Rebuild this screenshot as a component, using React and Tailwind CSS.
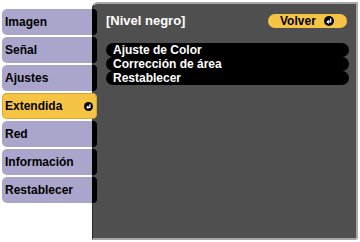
import React from 'react'

const TABS = ['Imagen', 'Señal', 'Ajustes', 'Extendida', 'Red', 'Información', 'Restablecer']
const SELECTED = 'Extendida'

const ITEMS = ['Ajuste de Color', 'Corrección de área', 'Restablecer']

function EnterIcon({ size = 10 }) {
  return (
    <svg width={size} height={size} viewBox="0 0 10 10">
      <circle cx="5" cy="5" r="5" fill="#000" />
      <path d="M6.6 2.6 V5.9 H3.4" fill="none" stroke="#fff" strokeWidth="1.4" />
      <path d="M4.9 4.4 L3.3 5.9 L4.9 7.4" fill="none" stroke="#fff" strokeWidth="1.3" />
    </svg>
  )
}

function Tab({ label }) {
  if (label === SELECTED) {
    return (
      <div className="flex h-[26px] items-center justify-between rounded-[5px] bg-[#f6c445] pl-[3px] pr-[4px] shadow-[inset_0_0_0_1px_#d9a52c]">
        <span>{label}</span>
        <EnterIcon size={9} />
      </div>
    )
  }
  return (
    <div className="flex h-[26px]">
      <div className="flex flex-1 items-center rounded-l-[5px] bg-[#aaa5cb] pl-[3px]">{label}</div>
      <div className="w-[5px] rounded-r-[4px] bg-black" />
    </div>
  )
}

export default function App() {
  return (
    <div
      className="flex h-[242px] w-[360px] bg-white pt-[2px] text-[12px] font-bold text-black"
      style={{ fontFamily: '"Liberation Sans", Arial, sans-serif' }}
    >
      <div className="relative z-10 ml-[2px] -mr-[5px] flex w-[95px] flex-col gap-[2px] pt-[7px]">
        {TABS.map((tab) => (
          <Tab key={tab} label={tab} />
        ))}
      </div>
      <div className="mr-[2px] h-[238px] flex-1 rounded-tl-[6px] rounded-br-[3px] border-[2px] border-l-[1px] border-[#a8a8a8] border-l-[#2a2a2a] bg-[#4f4f4f] pl-[13px] pr-[7px] pt-[10px] text-white">
        <div className="flex h-[14px] items-center justify-between">
          <span className="text-[13px] leading-[14px]">[Nivel negro]</span>
          <div className="mr-[2px] flex h-[14px] w-[79px] items-center gap-[8px] rounded-full bg-[#f6c445] pl-[12px] text-black">
            <span className="leading-[14px]">Volver</span>
            <EnterIcon size={10} />
          </div>
        </div>
        <div className="mt-[15px] flex flex-col">
          {ITEMS.map((item) => (
            <div key={item} className="h-[14px] rounded-full bg-black pl-[7px] leading-[14px]">
              {item}
            </div>
          ))}
        </div>
      </div>
    </div>
  )
}
